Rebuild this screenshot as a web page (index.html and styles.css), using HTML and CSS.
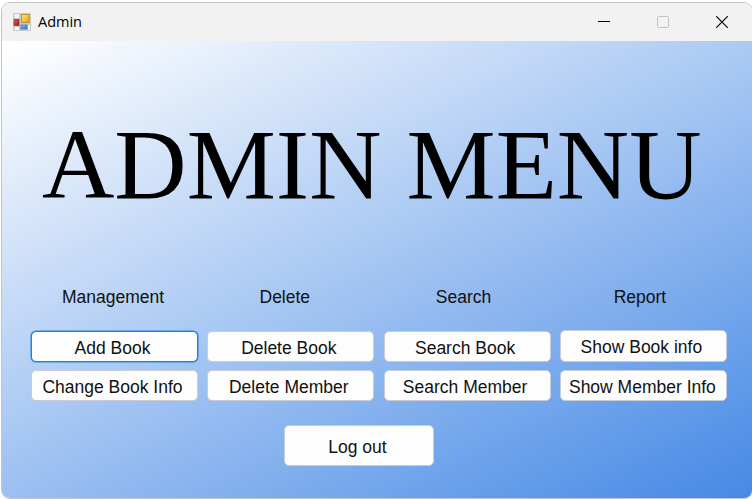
FILE: index.html
```html
<!DOCTYPE html>
<html lang="en">
<head>
<meta charset="utf-8">
<title>Admin</title>
<link rel="stylesheet" href="styles.css">
</head>
<body>
<div class="window">
  <header class="titlebar">
    <svg class="app-icon" width="18" height="18" viewBox="0 0 18 18">
      <defs>
        <linearGradient id="gold" x1="0" y1="0" x2="1" y2="1"><stop offset="0" stop-color="#ffe680"/><stop offset="1" stop-color="#e3a50d"/></linearGradient>
        <linearGradient id="blue" x1="0" y1="0" x2="1" y2="1"><stop offset="0" stop-color="#8dbcff"/><stop offset="1" stop-color="#2f68c8"/></linearGradient>
        <linearGradient id="red" x1="0" y1="0" x2="1" y2="1"><stop offset="0" stop-color="#dc665c"/><stop offset="1" stop-color="#9d1010"/></linearGradient>
      </defs>
      <rect width="18" height="18" fill="#c9c9c9"/>
      <rect x="1.5" y="1" width="4.5" height="4" fill="#f4f4f4"/>
      <rect x="1.5" y="14" width="4.5" height="3" fill="#f4f4f4"/>
      <rect x="15" y="12" width="2" height="5" fill="#f0f0f0"/>
      <rect x="1" y="6.5" width="5" height="6" fill="url(#red)" stroke="#a32b22" stroke-width=".7"/>
      <rect x="8.4" y="1.6" width="7.8" height="7.8" fill="url(#gold)" stroke="#b88717" stroke-width=".8"/>
      <rect x="7.9" y="12" width="6.2" height="4" fill="url(#blue)" stroke="#477bc9" stroke-width=".8"/>
    </svg>
    <span class="caption">Admin</span>
    <div class="controls">
      <svg width="12" height="12" viewBox="0 0 12 12"><path d="M0 5.5H12" stroke="#000"/></svg>
      <svg width="12" height="12" viewBox="0 0 12 12"><rect x=".5" y=".5" width="11" height="11" rx="1" fill="none" stroke="#c3c3c3"/></svg>
      <svg width="12" height="12" viewBox="0 0 12 12"><path d="M.3.3 11.7 11.7M11.7.3.3 11.7" stroke="#000" stroke-width="1.2"/></svg>
    </div>
  </header>
  <main class="client">
    <h1 class="title">ADMIN MENU</h1>
    <div class="columns">
      <section class="column">
        <h2 class="label">Management</h2>
        <button class="btn focused">Add Book</button>
        <button class="btn">Change Book Info</button>
      </section>
      <section class="column">
        <h2 class="label label-delete">Delete</h2>
        <button class="btn">Delete Book</button>
        <button class="btn">Delete Member</button>
      </section>
      <section class="column">
        <h2 class="label label-search">Search</h2>
        <button class="btn">Search Book</button>
        <button class="btn">Search Member</button>
      </section>
      <section class="column">
        <h2 class="label label-report">Report</h2>
        <button class="btn tall">Show Book info</button>
        <button class="btn member-info">Show Member Info</button>
      </section>
    </div>
    <button class="btn logout">Log out</button>
  </main>
</div>
</body>
</html>
```
FILE: styles.css
```css
* { box-sizing: border-box; }
body {
  margin: 0;
  padding: 2px 0 0 1px;
  height: 499px;
  background: #fff;
  overflow: hidden;
  font-family: "Liberation Sans", Arial, sans-serif;
}
.window {
  width: 752px;
  height: 497px;
  border: 1px solid #c3c6ca;
  border-radius: 9px;
  overflow: hidden;
  background: #f2f2f2;
}
.titlebar {
  height: 38px;
  display: flex;
  align-items: center;
  padding: 0 24px 0 11px;
  background: #f2f2f2;
}
.app-icon { flex: none; }
.caption {
  margin: -1px 0 0 7px;
  font: 14.5px/20px "Open Sans", "Noto Sans", sans-serif;
  color: #000;
}
.controls {
  margin-left: auto;
  display: flex;
  gap: 47px;
}
.controls svg { display: block; }
.client {
  height: 457px;
  padding: 66px 0 0 29px;
  background: linear-gradient(153deg, #fff 1%, #4488e5 101%);
}
.title {
  margin: 0 0 0 11px;
  font: 400 100.2px/115px "Liberation Serif", "Times New Roman", serif;
  color: #000;
  white-space: nowrap;
}
.columns {
  margin-top: 65px;
  display: flex;
  gap: 9.3px;
}
.column {
  width: 167px;
  height: 115px;
  display: flex;
  flex-direction: column;
}
.label {
  margin: 0 3px 23px 0;
  height: 20px;
  font-size: 17.5px;
  line-height: 20px;
  font-weight: 400;
  text-align: center;
  color: #111;
}
.label-delete { margin-right: 12px; }
.label-search { margin-right: 7px; }
.label-report { margin-right: 7px; }
.btn {
  display: block;
  flex: none;
  width: 167px;
  height: 31px;
  margin: 1px 0 7px;
  padding: 2px 4px 0 0;
  border: 1px solid #c9cdd3;
  border-radius: 5px;
  background: #fdfdfd;
  color: #111;
  font: 17.5px/20px "Liberation Sans", Arial, sans-serif;
  text-align: center;
  white-space: nowrap;
}
.focused {
  border-color: #1c86dc;
  box-shadow: 0 0 0 .5px #1c86dc;
}
.tall { height: 32px; margin-top: 0; }
.member-info { padding-right: 2px; }
.logout {
  width: 150px;
  height: 41px;
  margin: 23px 0 0 253.4px;
}
```
